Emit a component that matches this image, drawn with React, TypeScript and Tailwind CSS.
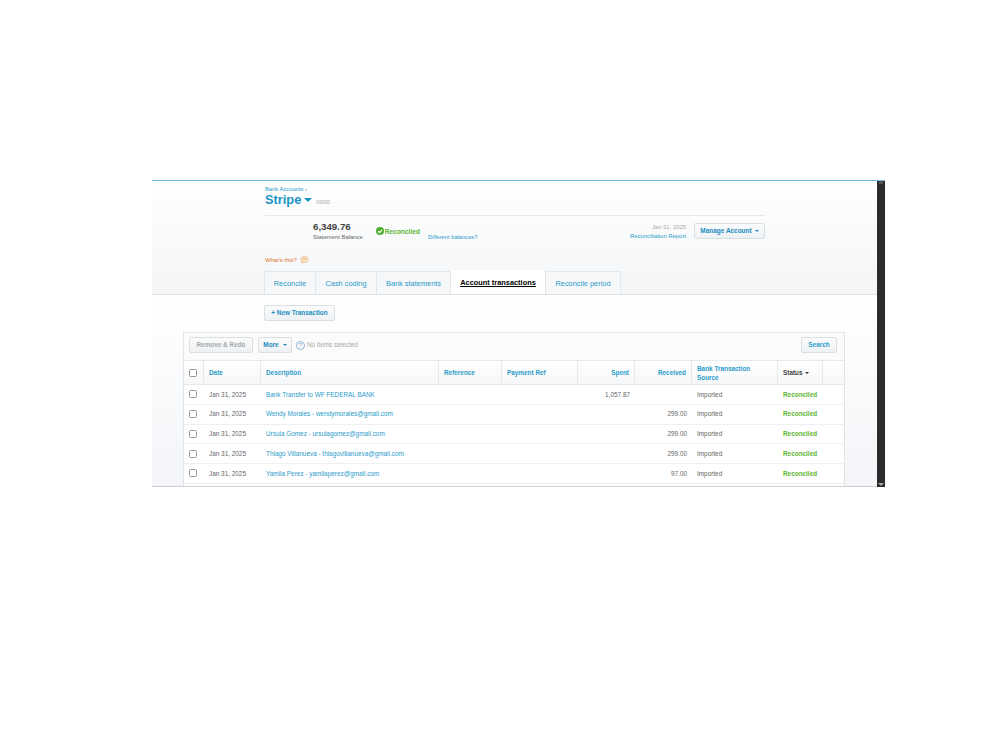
import React from 'react';

const rows = [
  { description: 'Bank Transfer to WF FEDERAL BANK', spent: '1,057.87', received: '' },
  { description: 'Wendy Morales - wendymorales@gmail.com', spent: '', received: '299.00' },
  { description: 'Ursula Gomez - ursulagomez@gmail.com', spent: '', received: '299.00' },
  { description: 'Thiago Villanueva - thiagovillanueva@gmail.com', spent: '', received: '299.00' },
  { description: 'Yamila Perez - yamilaperez@gmail.com', spent: '', received: '97.00' },
];

const columns = 'grid grid-cols-[20px_57px_178px_63px_76px_57px_57px_86px_45px_21px]';
const button =
  'flex items-center rounded-[2px] border border-[#dcdfe2] bg-gradient-to-b from-[#fbfcfc] to-[#eef1f3] font-bold';

function Caret({ className }: { className: string }) {
  return (
    <svg viewBox="0 0 8 4" className={className} fill="currentColor">
      <path d="M0 0h8L4 4z" />
    </svg>
  );
}

function Checkbox() {
  return <span className="block h-[8px] w-[8px] rounded-[1.5px] border border-[#999] bg-white" />;
}

function HeaderCell({ children, right, dark }: { children: React.ReactNode; right?: boolean; dark?: boolean }) {
  return (
    <div
      className={`flex items-center border-r border-[#e6e9eb] px-[5px] font-bold leading-[9px] ${right ? 'justify-end' : ''} ${dark ? 'text-[#444]' : 'text-[#2a9bc9]'}`}
    >
      {children}
    </div>
  );
}

function Tab({ label, active, width }: { label: string; active?: boolean; width: string }) {
  return (
    <div
      className={`flex h-[23px] items-center justify-center border-r border-[#e4e7ea] pt-[1px] text-[7.4px] ${width} ${
        active ? 'h-[24px] bg-white font-bold text-black underline' : 'border-t bg-[#f6f7f9] text-[#2a9bc9]'
      }`}
    >
      {label}
    </div>
  );
}

export default function App() {
  return (
    <div className="h-[750px] w-[1000px] bg-white pl-[152px] pt-[180px] font-['Liberation_Sans',Arial,sans-serif] text-[6.4px] text-[#666]">
      <div className="flex h-[307px] w-[733px] overflow-hidden border-t border-[#6fb3de]">
        <main className="flex w-[725px] flex-col border-b border-[#cfcfcf]">
          {/* Account header */}
          <section className="h-[114px] shrink-0 border-b border-[#dfe2e5] bg-gradient-to-b from-white to-[#f3f5f7] pl-[113px]">
            <div className="w-[500px]">
              <div className="pt-[5px] text-[5.8px] leading-[7px] text-[#2a9bc9]">Bank Accounts ›</div>
              <div className="flex h-[14px] items-center">
                <span className="text-[12.8px] font-bold text-[#1b95c9]">Stripe</span>
                <Caret className="ml-[3px] h-[4px] w-[8px] text-[#1b95c9]" />
                <span className="ml-[4px] mt-[3px] text-[6.2px] text-[#aaa]">0000</span>
              </div>
              <div className="mt-[8px] flex h-[30px] border-t border-[#e6e8ea] pl-[48px]">
                <div className="pt-[5px]">
                  <div className="text-[9.7px] font-bold leading-[12px] text-[#444]">6,349.76</div>
                  <div className="text-[5.9px] leading-[8px]">Statement Balance</div>
                </div>
                <div className="ml-[13px] flex h-fit items-center pt-[11px]">
                  <span className="flex h-[8px] w-[8px] items-center justify-center rounded-full bg-[#4fae2e]">
                    <svg viewBox="0 0 8 8" className="h-[8px] w-[8px]" fill="none" stroke="white" strokeWidth="1.2">
                      <path d="M2 4.2l1.5 1.5L6 2.8" />
                    </svg>
                  </span>
                  <span className="ml-[1px] text-[6.6px] font-bold leading-[7px] text-[#5cb531]">Reconciled</span>
                </div>
                <div className="ml-[8px] pt-[17px] text-[5.75px] leading-[8px] text-[#2a9bc9]">Different balances?</div>
                <div className="ml-auto pt-[7px] text-right text-[5.9px] leading-[9px]">
                  <div className="text-[#aaa]">Jan 31, 2025</div>
                  <div className="text-[#2a9bc9]">Reconciliation Report</div>
                </div>
                <div className={`${button} ml-[8px] mt-[7px] h-[16px] w-[71px] justify-center text-[6.45px] text-[#1b8cc0]`}>
                  Manage Account
                  <Caret className="ml-[3px] h-[2px] w-[4px]" />
                </div>
              </div>
              <div className="mt-[10px] flex h-[10px] items-center text-[5.85px] text-[#e0701f]">
                What's this?
                <svg viewBox="0 0 10 9" className="ml-[3px] h-[8px] w-[9px]">
                  <ellipse cx="5" cy="4" rx="4.2" ry="3.3" fill="#fbe6c9" stroke="#eab17c" strokeWidth="0.8" />
                  <path d="M3 4h4M3 2.8h4" stroke="#eab17c" strokeWidth="0.6" />
                  <path d="M2 6.5L1.5 8.6L4 7.2z" fill="#eab17c" />
                </svg>
              </div>
              <div className="-ml-[1px] mt-[5px] flex items-end border-l border-[#e4e7ea]">
                <Tab label="Reconcile" width="w-[51px]" />
                <Tab label="Cash coding" width="w-[61px]" />
                <Tab label="Bank statements" width="w-[74px]" />
                <Tab label="Account transactions" active width="w-[95px]" />
                <Tab label="Reconcile period" width="w-[75px]" />
              </div>
            </div>
          </section>

          {/* Transactions */}
          <section className="min-h-0 flex-1 overflow-hidden bg-gradient-to-b from-white to-[#f3f5f8] pl-[31px] pt-[10px]">
            <div className={`${button} ml-[81px] h-[16px] w-[71px] justify-center text-[#1b8cc0]`}>+ New Transaction</div>
            <div className="mt-[11px] w-[662px] border border-b-0 border-[#e2e5e8] bg-white">
              <div className="flex h-[28px] items-center border-b border-[#e6e9eb] bg-[#fbfbfc] pb-[3px] pl-[5px] pr-[7px]">
                <div className={`${button} h-[16px] w-[64px] justify-center text-[#a5a8aa]`}>Remove &amp; Redo</div>
                <div className={`${button} ml-[5px] h-[16px] w-[34px] justify-center text-[#1b8cc0]`}>
                  More
                  <Caret className="ml-[4px] h-[2px] w-[4px]" />
                </div>
                <span className="ml-[4px] flex h-[9px] w-[9px] items-center justify-center rounded-full border border-[#8fb4d6] text-[6px] text-[#7ba3c9]">
                  ?
                </span>
                <span className="ml-[2px] text-[#aaa]">No items selected</span>
                <div className={`${button} ml-auto h-[16px] w-[36px] justify-center text-[#2a9bc9]`}>Search</div>
              </div>
              <div className={`${columns} h-[24px] border-b border-[#e6e9eb] bg-gradient-to-b from-white to-[#f6f7f8]`}>
                <div className="flex items-center justify-center border-r border-[#e6e9eb] pr-[1px]">
                  <Checkbox />
                </div>
                <HeaderCell>Date</HeaderCell>
                <HeaderCell>Description</HeaderCell>
                <HeaderCell>Reference</HeaderCell>
                <HeaderCell>Payment Ref</HeaderCell>
                <HeaderCell right>Spent</HeaderCell>
                <HeaderCell right>Received</HeaderCell>
                <HeaderCell>
                  Bank Transaction
                  <br />
                  Source
                </HeaderCell>
                <HeaderCell dark>
                  Status
                  <Caret className="ml-[2px] h-[2px] w-[4px] text-[#333]" />
                </HeaderCell>
                <div />
              </div>
              {rows.map((row) => (
                <div key={row.description} className={`${columns} h-[19.75px] items-center border-b border-[#eeeff1]`}>
                  <div className="flex justify-center pr-[2px]">
                    <Checkbox />
                  </div>
                  <div className="pl-[5px]">Jan 31, 2025</div>
                  <div className="whitespace-nowrap pl-[5px] text-[#2a9bc9]">{row.description}</div>
                  <div />
                  <div />
                  <div className="pr-[5px] text-right">{row.spent}</div>
                  <div className="pr-[5px] text-right">{row.received}</div>
                  <div className="pl-[5px]">Imported</div>
                  <div className="whitespace-nowrap pl-[5px] font-bold text-[#5cb531]">Reconciled</div>
                  <div />
                </div>
              ))}
              <div className="h-[20px]" />
            </div>
          </section>
        </main>

        {/* Scrollbar */}
        <div className="flex w-[8px] flex-col items-center justify-between bg-[#2b2b2b] pb-[1px]">
          <span className="h-[3px] w-[4px] bg-[#555]" />
          <Caret className="h-[3px] w-[6px] text-[#aaa]" />
        </div>
      </div>
    </div>
  );
}
